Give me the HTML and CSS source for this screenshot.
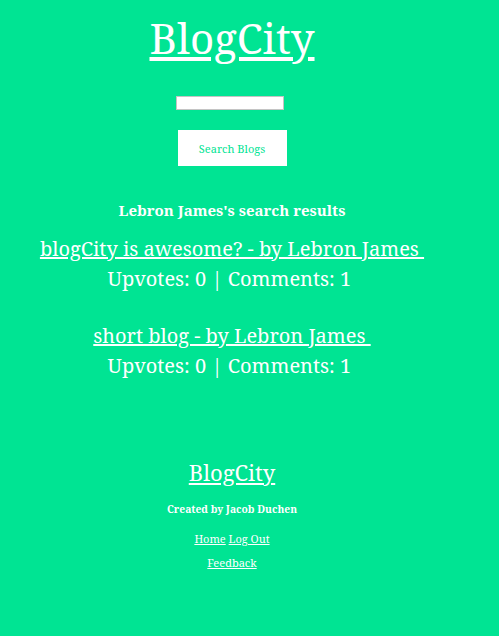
FILE: index.html
```html
<!DOCTYPE html>
<html>
<head>
<meta charset="utf-8">
<link rel="stylesheet" href="styles.css">
</head>
<body>
<div class="page">
  <header class="top">
    <h1 class="brand"><a href="#">BlogCity</a></h1>
    <form class="search">
      <input class="search-input" type="text">
      <button class="search-btn" type="button">Search Blogs</button>
    </form>
  </header>
  <main class="results">
    <h2 class="results-title">Lebron James's search results</h2>
    <div class="post">
      <a class="post-link" href="#">blogCity is awesome? - by Lebron James&nbsp;</a>
      <div class="post-meta">Upvotes: 0 | Comments: 1&nbsp;</div>
    </div>
    <div class="post">
      <a class="post-link" href="#">short blog - by Lebron James&nbsp;</a>
      <div class="post-meta">Upvotes: 0 | Comments: 1&nbsp;</div>
    </div>
  </main>
  <footer class="foot">
    <a class="foot-brand" href="#">BlogCity</a>
    <p class="credit">Created by Jacob Duchen</p>
    <div class="foot-links"><a href="#">Home</a> <a href="#">Log Out</a></div>
    <div class="foot-links feedback"><a href="#">Feedback</a></div>
  </footer>
</div>
</body>
</html>
```
FILE: styles.css
```css
html, body {
  margin: 0;
  padding: 0;
  background: #00e493;
}
body {
  font-family: "Noto Serif", "DejaVu Serif", serif;
  color: #fff;
  height: 636px;
}
.page {
  width: 464px;
  display: flex;
  flex-direction: column;
  align-items: center;
  text-align: center;
}
a { color: #fff; }
.top, .results, .foot, .search, .post {
  display: flex;
  flex-direction: column;
  align-items: center;
}
.brand {
  margin: 13px 0 0;
  font-size: 42px;
  font-weight: normal;
  line-height: 50px;
}
.search { margin-top: 33px; }
.search-input {
  box-sizing: border-box;
  width: 108px;
  height: 14px;
  padding: 0;
  border: 1px solid #c4c4c4;
  background: #fff;
  margin: 0 5px 0 0;
}
.search-btn {
  margin-top: 20px;
  width: 109px;
  height: 36px;
  border: none;
  background: #fff;
  color: #00e493;
  font-family: inherit;
  font-size: 11px;
  padding: 0;
}
.results-title {
  margin: 34px 0 0;
  font-size: 15px;
  line-height: 20px;
}
.post {
  font-size: 20px;
  line-height: 30px;
  margin-top: 14px;
}
.post + .post { margin-top: 27px; }
.foot { margin-top: 76px; }
.foot-brand {
  font-size: 22px;
  line-height: 30px;
}
.credit {
  margin: 15px 0 0;
  font-size: 10.3px;
  line-height: 15px;
  font-weight: bold;
}
.foot-links {
  margin-top: 14px;
  font-size: 11px;
  line-height: 15px;
}
.foot-links.feedback { margin-top: 9px; }
```
